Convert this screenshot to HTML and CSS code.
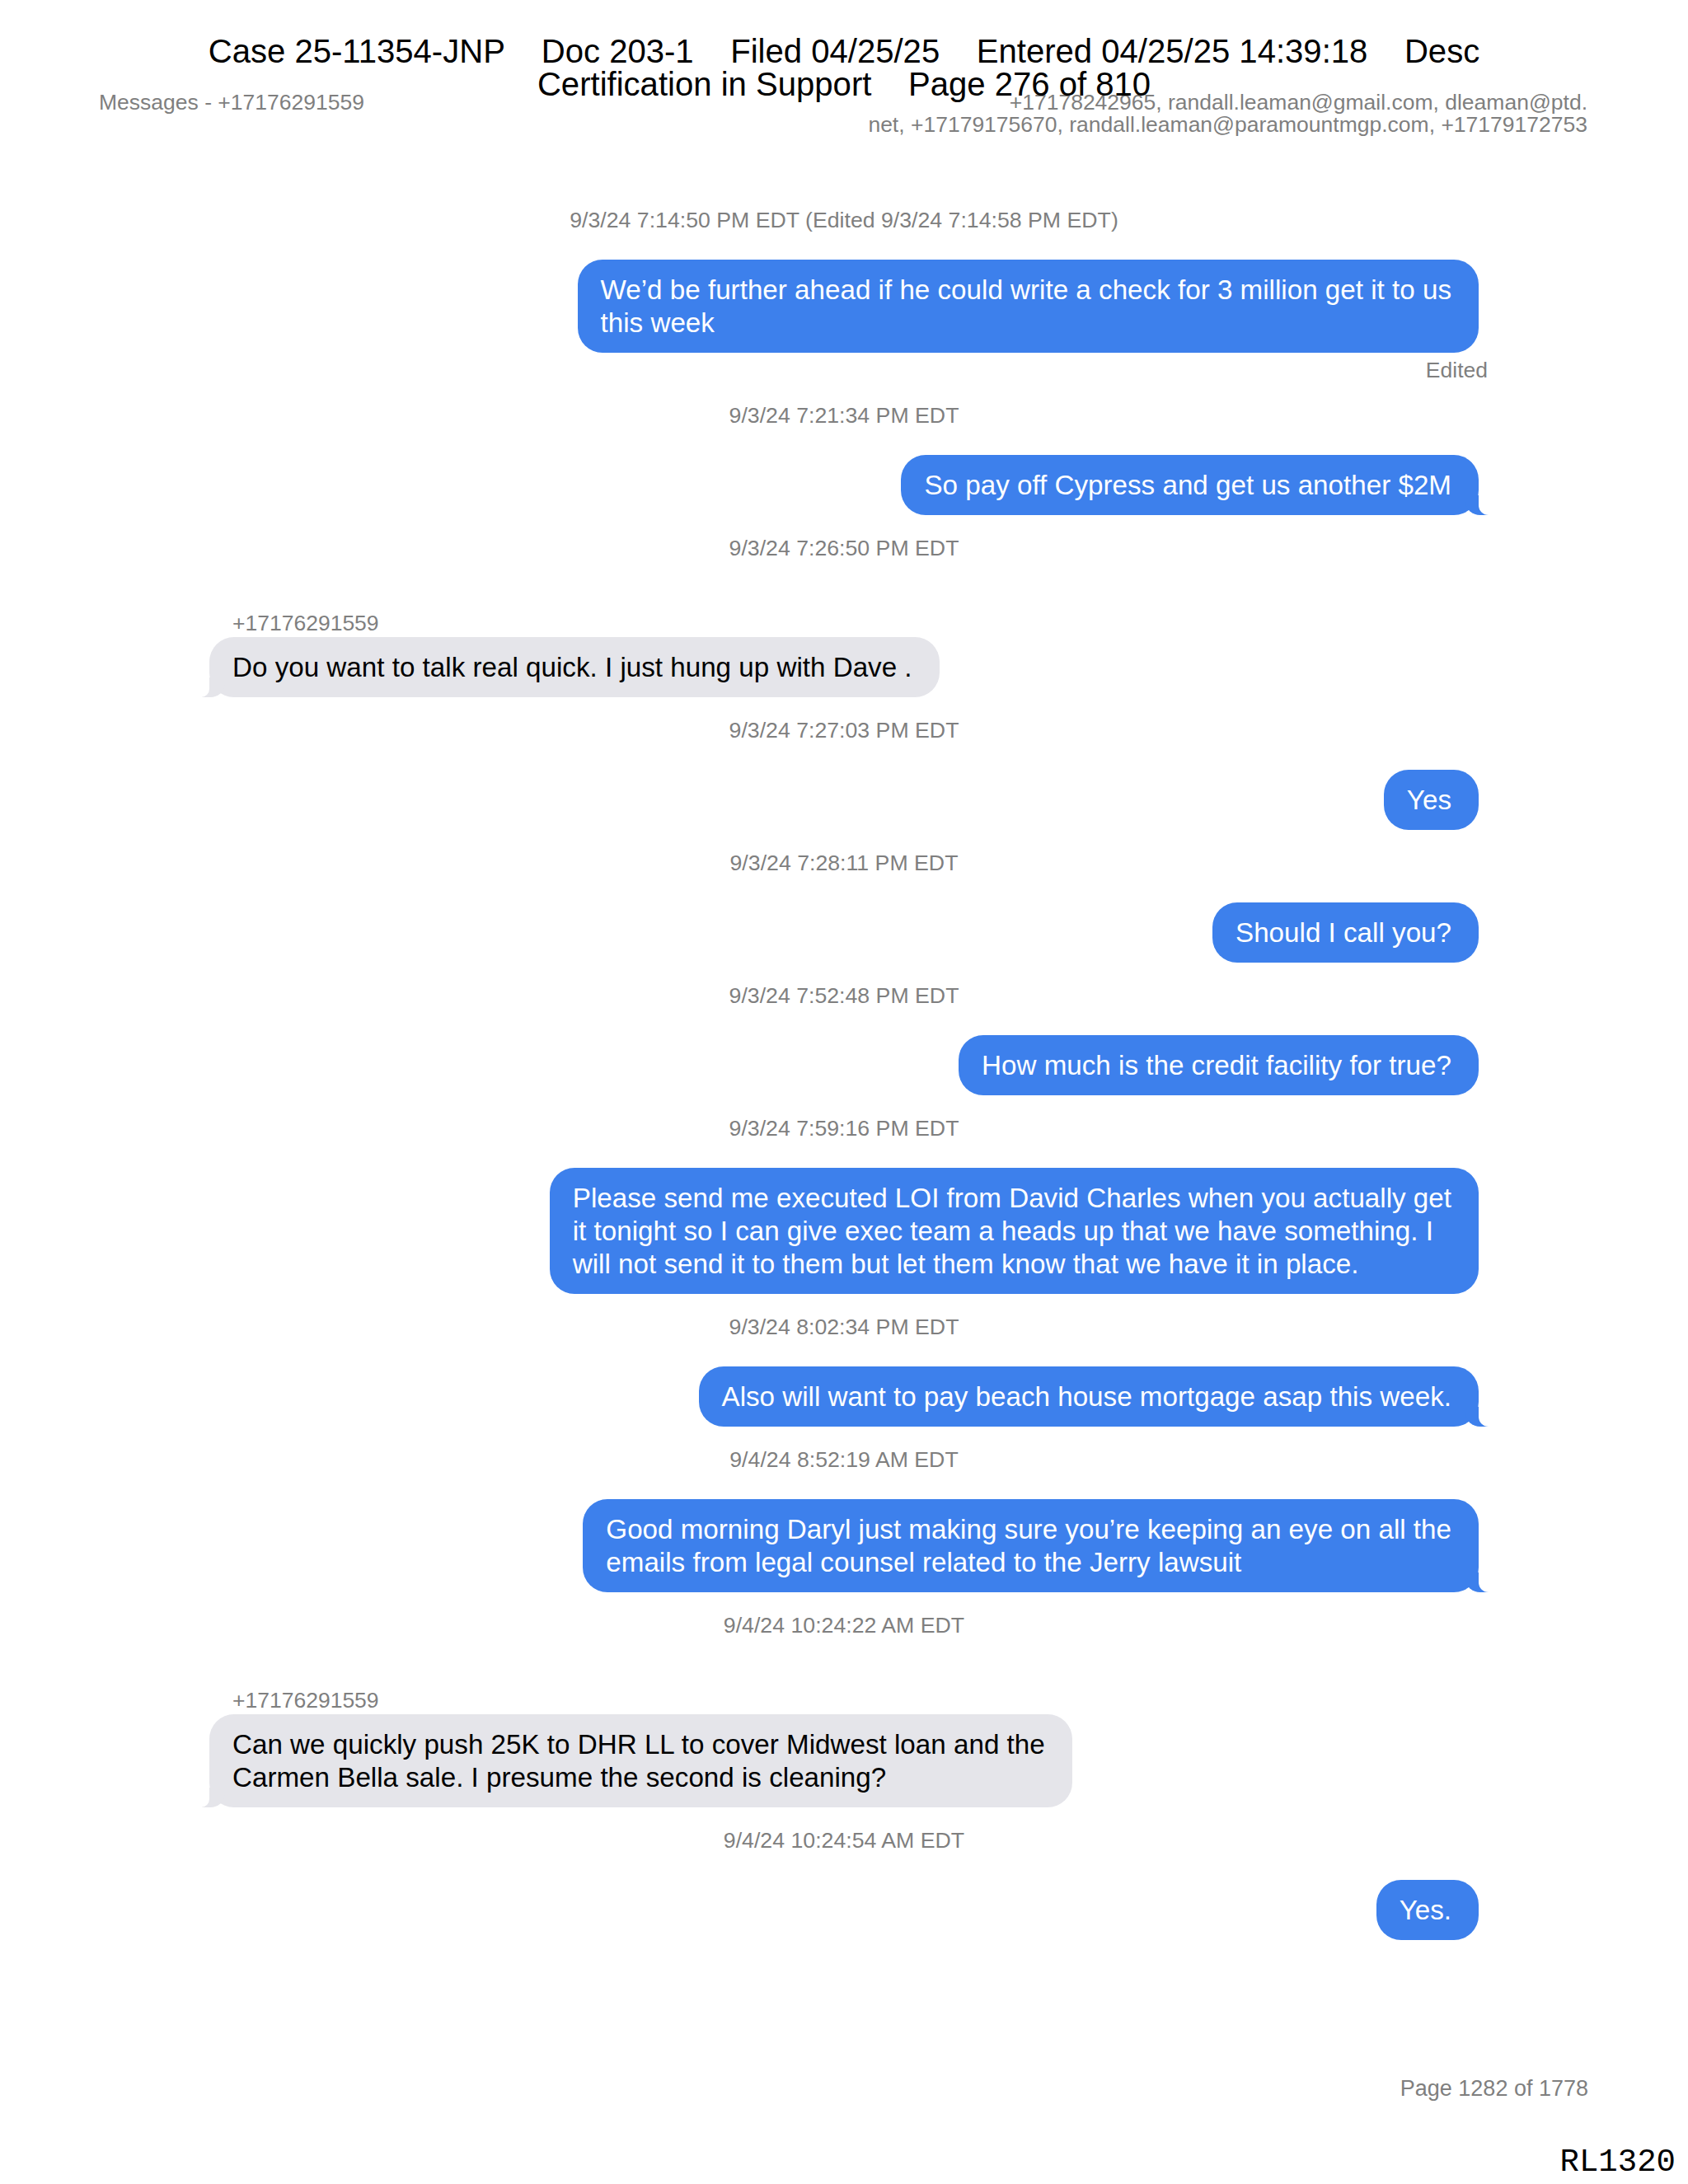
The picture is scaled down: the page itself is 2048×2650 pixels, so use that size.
FILE: index.html
```html
<!DOCTYPE html>
<html>
<head>
    <meta charset="utf-8" />
    <title>Messages - +17176291559</title>
    <link rel="stylesheet" href="styles.css">
</head>
<body>
    <div class="filing">
        <div class="line">Case 25-11354-JNP    Doc 203-1    Filed 04/25/25    Entered 04/25/25 14:39:18    Desc</div>
        <div class="line">Certification in Support    Page 276 of 810</div>
    </div>

    <div class="page">
        <div class="top">
            <div>Messages - +17176291559</div>
            <div class="people">+17178242965, randall.leaman@gmail.com, dleaman@ptd.<br>net, +17179175670, randall.leaman@paramountmgp.com, +17179172753</div>
        </div>

        <div class="thread">
            <div class="stamp">9/3/24 7:14:50 PM EDT (Edited 9/3/24 7:14:58 PM EDT)</div>
            <div class="bubble out">We’d be further ahead if he could write a check for 3 million get it to us<br>this week</div>
            <div class="edited">Edited</div>

            <div class="stamp">9/3/24 7:21:34 PM EDT</div>
            <div class="bubble out tail">So pay off Cypress and get us another $2M</div>

            <div class="stamp">9/3/24 7:26:50 PM EDT</div>
            <div class="sender">+17176291559</div>
            <div class="bubble in tail">Do you want to talk real quick. I just hung up with Dave .</div>

            <div class="stamp">9/3/24 7:27:03 PM EDT</div>
            <div class="bubble out">Yes</div>

            <div class="stamp">9/3/24 7:28:11 PM EDT</div>
            <div class="bubble out">Should I call you?</div>

            <div class="stamp">9/3/24 7:52:48 PM EDT</div>
            <div class="bubble out">How much is the credit facility for true?</div>

            <div class="stamp">9/3/24 7:59:16 PM EDT</div>
            <div class="bubble out">Please send me executed LOI from David Charles when you actually get<br>it tonight so I can give exec team a heads up that we have something. I<br>will not send it to them but let them know that we have it in place.</div>

            <div class="stamp">9/3/24 8:02:34 PM EDT</div>
            <div class="bubble out tail">Also will want to pay beach house mortgage asap this week.</div>

            <div class="stamp">9/4/24 8:52:19 AM EDT</div>
            <div class="bubble out tail">Good morning Daryl just making sure you’re keeping an eye on all the<br>emails from legal counsel related to the Jerry lawsuit</div>

            <div class="stamp">9/4/24 10:24:22 AM EDT</div>
            <div class="sender">+17176291559</div>
            <div class="bubble in tail">Can we quickly push 25K to DHR LL to cover Midwest loan and the<br>Carmen Bella sale. I presume the second is cleaning?</div>

            <div class="stamp">9/4/24 10:24:54 AM EDT</div>
            <div class="bubble out">Yes.</div>
        </div>

        <div class="footer">
            <div class="pagenum">Page 1282 of 1778</div>
            <div class="bates">RL1320</div>
        </div>
    </div>
</body>
</html>
```

FILE: styles.css
```css
body {
    margin: 0;
    background: white;
    font-family: "Liberation Sans", Arial, sans-serif;
    color: #000;
    position: relative;
}
.filing {
    position: absolute;
    top: 42px;
    left: 0;
    right: 0;
    text-align: center;
    font-size: 40.1px;
    line-height: 40px;
}
.filing .line {
    white-space: pre;
}
.page {
    min-height: 2650px;
    display: flex;
    flex-direction: column;
}
.top {
    display: flex;
    justify-content: space-between;
    padding: 111px 122px 0 120px;
    font-size: 26.5px;
    line-height: 27px;
    color: #7f7f7f;
}
.people {
    text-align: right;
}
.thread {
    width: 1540px;
    margin: 62px auto 0;
    display: flex;
    flex-direction: column;
    align-items: flex-start;
}
.stamp {
    align-self: stretch;
    text-align: center;
    font-size: 26.7px;
    line-height: 30px;
    color: #7f7f7f;
    margin: 25px 0 33px;
}
.sender {
    font-size: 26.5px;
    line-height: 30px;
    color: #7f7f7f;
    margin: 28px 0 2px 28px;
}
.edited {
    align-self: flex-end;
    margin: 6px -11px 0 0;
    font-size: 26.5px;
    line-height: 30px;
    color: #7f7f7f;
}
.bubble {
    position: relative;
    padding: 16.5px 33px 16.5px 28px;
    border-radius: 30px;
    font-size: 33.2px;
    line-height: 40px;
    white-space: nowrap;
}
.out {
    align-self: flex-end;
    background: #3d80ec;
    color: white;
}
.in {
    background: #e5e5ea;
    color: #000;
}
.out.tail::before,
.out.tail::after,
.in.tail::before,
.in.tail::after {
    content: "";
    position: absolute;
    bottom: 0;
    height: 24px;
}
.out.tail::before {
    right: -12px;
    width: 28px;
    background: #3d80ec;
    border-bottom-left-radius: 18px 16px;
}
.out.tail::after {
    right: -22px;
    width: 22px;
    background: white;
    border-bottom-left-radius: 12px;
}
.in.tail::before {
    left: -9px;
    width: 28px;
    background: #e5e5ea;
    border-bottom-right-radius: 18px 16px;
}
.in.tail::after {
    left: -20px;
    width: 20px;
    background: white;
    border-bottom-right-radius: 10px;
}
.footer {
    margin-top: auto;
    display: flex;
    flex-direction: column;
    align-items: flex-end;
}
.pagenum {
    padding-right: 121px;
    font-size: 27px;
    line-height: 30px;
    color: #7f7f7f;
}
.bates {
    margin-top: 56px;
    padding: 0 15px 6px 0;
    font-family: "Liberation Mono", "Courier New", monospace;
    font-size: 39px;
    line-height: 39px;
}
```
